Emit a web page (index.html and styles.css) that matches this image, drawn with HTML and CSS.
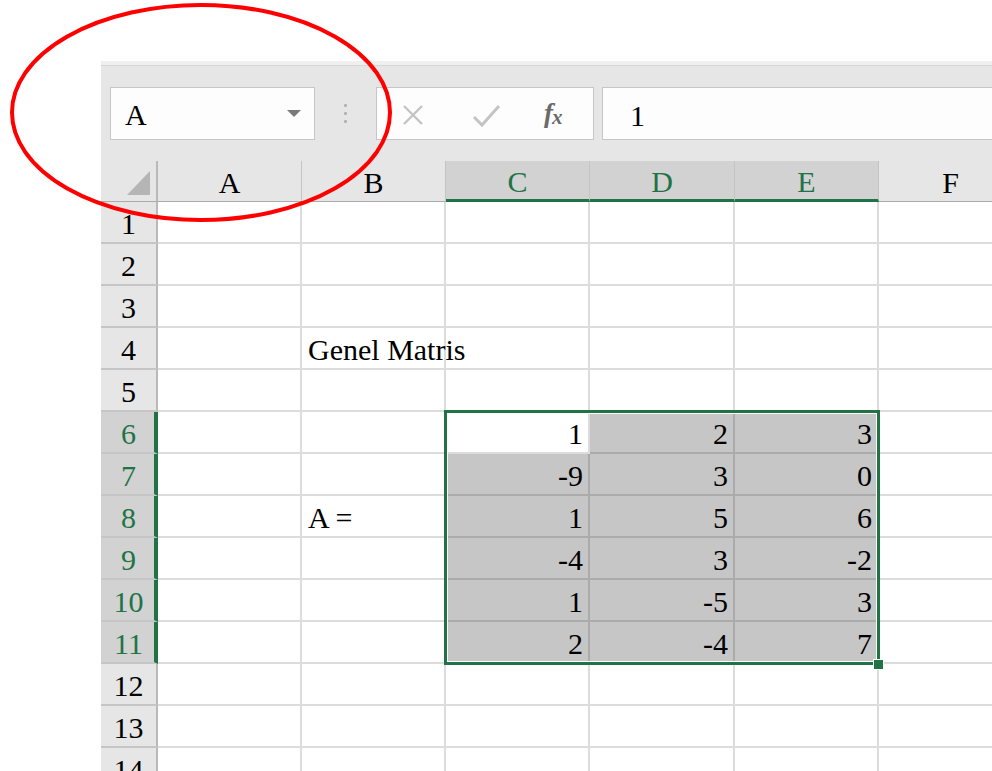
FILE: index.html
```html
<!DOCTYPE html>
<html lang="tr">
<head>
<meta charset="utf-8">
<title>Genel Matris</title>
<link rel="stylesheet" href="styles.css">
</head>
<body>
<div class="app">
  <div class="toolbar">
    <div class="namebox"><span class="name">A</span><span class="caret"></span></div>
    <div class="grip"><i></i><i></i><i></i></div>
    <div class="fbtns">
      <svg class="btn-x" width="24" height="24" viewBox="0 0 24 24"><path d="M3 3 L21 21 M21 3 L3 21" stroke="#c4c4c4" stroke-width="2.4" fill="none"/></svg>
      <svg class="btn-ok" width="30" height="26" viewBox="0 0 30 26"><path d="M2 14 L10 22 L27 3" stroke="#c4c4c4" stroke-width="3" fill="none"/></svg>
      <span class="fx">f<span class="fx-x">x</span></span>
    </div>
    <div class="finput">1</div>
  </div>

  <div class="sheet">
    <div class="corner"><span class="tri"></span></div>
    <div class="ch">A</div>
    <div class="ch">B</div>
    <div class="ch sel">C</div>
    <div class="ch sel">D</div>
    <div class="ch sel">E</div>
    <div class="ch">F</div>
    <div class="ch"></div>

    <div class="rh">1</div><div class="c"></div><div class="c"></div><div class="c"></div><div class="c"></div><div class="c"></div><div class="c"></div><div class="c"></div>
    <div class="rh">2</div><div class="c"></div><div class="c"></div><div class="c"></div><div class="c"></div><div class="c"></div><div class="c"></div><div class="c"></div>
    <div class="rh">3</div><div class="c"></div><div class="c"></div><div class="c"></div><div class="c"></div><div class="c"></div><div class="c"></div><div class="c"></div>
    <div class="rh">4</div><div class="c"></div><div class="c txt">Genel Matris</div><div class="c"></div><div class="c"></div><div class="c"></div><div class="c"></div><div class="c"></div>
    <div class="rh">5</div><div class="c"></div><div class="c"></div><div class="c"></div><div class="c"></div><div class="c"></div><div class="c"></div><div class="c"></div>
    <div class="rh sel">6</div><div class="c"></div><div class="c"></div><div class="c num active">1</div><div class="c num hl">2</div><div class="c num hl">3</div><div class="c"></div><div class="c"></div>
    <div class="rh sel">7</div><div class="c"></div><div class="c"></div><div class="c num hl">-9</div><div class="c num hl">3</div><div class="c num hl">0</div><div class="c"></div><div class="c"></div>
    <div class="rh sel">8</div><div class="c"></div><div class="c txt">A =</div><div class="c num hl">1</div><div class="c num hl">5</div><div class="c num hl">6</div><div class="c"></div><div class="c"></div>
    <div class="rh sel">9</div><div class="c"></div><div class="c"></div><div class="c num hl">-4</div><div class="c num hl">3</div><div class="c num hl">-2</div><div class="c"></div><div class="c"></div>
    <div class="rh sel">10</div><div class="c"></div><div class="c"></div><div class="c num hl">1</div><div class="c num hl">-5</div><div class="c num hl">3</div><div class="c"></div><div class="c"></div>
    <div class="rh sel">11</div><div class="c"></div><div class="c"></div><div class="c num hl">2</div><div class="c num hl">-4</div><div class="c num hl">7</div><div class="c"></div><div class="c"></div>
    <div class="rh">12</div><div class="c"></div><div class="c"></div><div class="c"></div><div class="c"></div><div class="c"></div><div class="c"></div><div class="c"></div>
    <div class="rh">13</div><div class="c"></div><div class="c"></div><div class="c"></div><div class="c"></div><div class="c"></div><div class="c"></div><div class="c"></div>
    <div class="rh">14</div><div class="c"></div><div class="c"></div><div class="c"></div><div class="c"></div><div class="c"></div><div class="c"></div><div class="c"></div>

    <div class="selection"></div>
    <div class="handle"></div>
  </div>
</div>

<svg class="mark" width="400" height="230" viewBox="0 0 400 230">
  <ellipse cx="201" cy="112.5" rx="189" ry="107.5" fill="none" stroke="#ff0000" stroke-width="4"/>
</svg>
</body>
</html>
```

FILE: styles.css
```css
html, body {
  margin: 0;
  padding: 0;
  background: #ffffff;
  overflow: hidden;
  width: 992px;
  height: 771px;
}

body {
  position: relative;
  font-family: "Liberation Serif", Tinos, "Times New Roman", Times, "Noto Serif", "DejaVu Serif", serif;
  font-size: 30px;
  color: #000;
}

.app {
  margin: 61px 0 0 101px;
  width: 1000px;
}

/* formula bar */
.toolbar {
  display: flex;
  align-items: stretch;
  height: 100px;
  box-sizing: border-box;
  padding: 22px 0 21px 9px;
  background: #e6e6e6;
  border-top: 4px solid #efefef;
  box-shadow: inset 0 1px 0 #d6d6d6;
}

.namebox {
  width: 205px;
  box-sizing: border-box;
  background: #fdfdfd;
  border: 1px solid #c6c6c6;
  display: flex;
  align-items: center;
  justify-content: space-between;
  padding: 0 13px 0 14px;
}

.name {
  line-height: 51px;
  padding-top: 2px;
}

.caret {
  width: 0;
  height: 0;
  border-left: 7px solid transparent;
  border-right: 7px solid transparent;
  border-top: 7px solid #7a7a7a;
}

.grip {
  width: 61px;
  display: flex;
  flex-direction: column;
  align-items: center;
  justify-content: center;
  gap: 5px;
}

.grip i {
  display: block;
  width: 3px;
  height: 3px;
  background: #b3b3b3;
  border-radius: 1px;
}

.fbtns {
  width: 218px;
  box-sizing: border-box;
  background: #fdfdfd;
  border: 1px solid #c6c6c6;
  display: flex;
  align-items: center;
  padding-left: 24px;
}

.btn-x {
  margin-top: 2px;
}

.btn-ok {
  margin-left: 47px;
  margin-top: 4px;
}

.fx {
  margin-left: 42px;
  font-style: italic;
  font-weight: bold;
  font-size: 27px;
  color: #6a6a6a;
  letter-spacing: -1px;
}

.fx-x {
  font-size: 21px;
  position: relative;
  top: 2px;
}

.finput {
  flex: 1;
  margin-left: 8px;
  background: #fdfdfd;
  border: 1px solid #c6c6c6;
  border-right: none;
  padding-left: 27px;
  line-height: 51px;
  padding-top: 2px;
  box-sizing: border-box;
}

/* worksheet grid */
.sheet {
  position: relative;
  display: grid;
  grid-template-columns: 57px 144px 144px 144px 145px 144px 144px 144px;
  grid-template-rows: 41px repeat(14, 42px);
}

.corner {
  position: relative;
  background: #e6e6e6;
  border-right: 2px solid #b9b9b9;
  border-bottom: 1px solid #ababab;
  box-sizing: border-box;
}

.tri {
  position: absolute;
  right: 6px;
  bottom: 6px;
  width: 0;
  height: 0;
  border-left: 23px solid transparent;
  border-bottom: 24px solid #b5b5b5;
}

.ch {
  background: #e6e6e6;
  border-right: 1px solid #c4c4c4;
  border-bottom: 1px solid #ababab;
  box-sizing: border-box;
  text-align: center;
  line-height: 38px;
  padding-top: 3px;
}

.ch.sel {
  background: #d2d2d2;
  color: #217346;
  border-bottom: 3px solid #217346;
  line-height: 36px;
}

.rh {
  background: #e6e6e6;
  border-right: 2px solid #b9b9b9;
  border-bottom: 2px solid #c6c6c6;
  box-sizing: border-box;
  text-align: center;
  line-height: 38px;
  padding-top: 3px;
}

.rh.sel {
  background: #d2d2d2;
  color: #217346;
  border-right: 4px solid #217346;
  padding-left: 2px;
}

.c {
  border-right: 2px solid #dcdcdc;
  border-bottom: 2px solid #dcdcdc;
  box-sizing: border-box;
  line-height: 38px;
  padding-top: 3px;
  white-space: nowrap;
}

.txt {
  padding-left: 6px;
}

.num {
  text-align: right;
  padding-right: 5px;
}

.hl {
  background: #c6c6c6;
  border-color: #ababab;
}

.active {
  background: #ffffff;
}

/* selection outline around C6:E11 */
.selection {
  position: absolute;
  left: 343px;
  top: 249px;
  width: 436px;
  height: 255px;
  box-sizing: border-box;
  border: 3px solid #217346;
  box-shadow: inset 0 0 0 1px #ffffff;
  pointer-events: none;
}

.handle {
  position: absolute;
  left: 772px;
  top: 498px;
  width: 11px;
  height: 11px;
  box-sizing: border-box;
  background: #217346;
  border: 1px solid #ffffff;
}

.mark {
  position: absolute;
  left: 0;
  top: 0;
  pointer-events: none;
}
```
